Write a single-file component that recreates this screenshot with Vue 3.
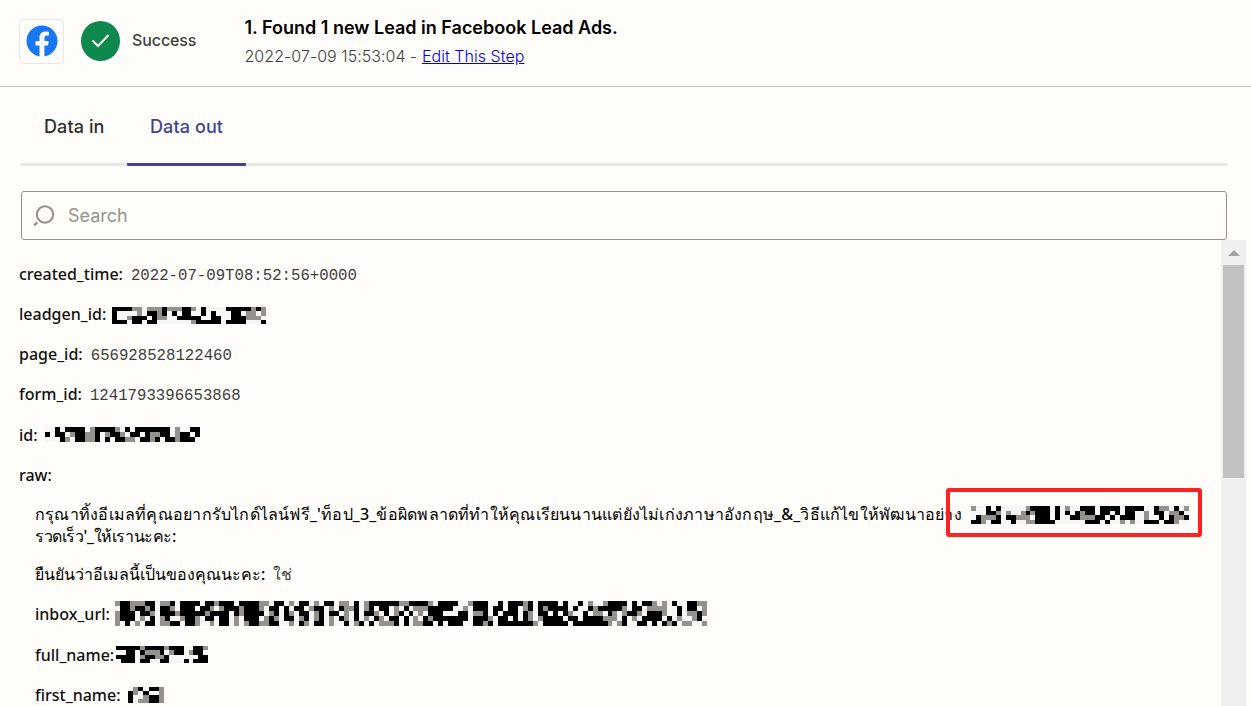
<template>
  <main class="step">
    <header class="step-header">
      <div class="app-icon">
        <svg width="32" height="32" viewBox="0 0 32 32">
          <circle cx="16" cy="16" r="15.5" fill="#1877f2" />
          <path d="M13.5 32V20.6H9.5V16h4v-3.5c0-4 2.3-6.1 5.9-6.1 1.7 0 3.5.3 3.5.3v3.9h-2c-1.9 0-2.5 1.2-2.5 2.4V16h4.3l-.7 4.6h-3.6V32z" fill="#fffdf9" />
        </svg>
      </div>
      <div class="status-icon">
        <svg width="20" height="16" viewBox="0 0 20 16">
          <path d="M1.5 7.5 7 13 17.5 2" fill="none" stroke="#fffdf9" stroke-width="2" />
        </svg>
      </div>
      <div class="status-label">Success</div>
      <div class="summary">
        <div class="summary-title">1. Found 1 new Lead in Facebook Lead Ads.</div>
        <div class="summary-meta">2022-07-09 15:53:04 - <a href="#">Edit This Step</a></div>
      </div>
    </header>

    <nav class="tabs">
      <button
        v-for="tab in tabs"
        :key="tab"
        class="tab"
        :class="{ active: tab === activeTab }"
        @click="activeTab = tab"
      >{{ tab }}</button>
    </nav>

    <label class="search">
      <svg width="22" height="22" viewBox="0 0 22 22">
        <circle cx="12" cy="9.5" r="8.2" fill="none" stroke="#95928e" stroke-width="2.1" />
        <path d="M4.4 17.1 1.2 20.3" stroke="#95928e" stroke-width="2.4" />
      </svg>
      <input type="text" placeholder="Search" />
    </label>

    <div class="output">
      <div class="fields">
        <div v-for="field in fields" :key="field.name" class="field" :class="field.kind">
          <span class="name">{{ field.name }}</span>
          <span v-if="field.value" class="value">{{ field.value }}</span>
          <span v-if="field.mask" class="mask-slot" :class="field.maskClass">
            <svg
              class="mask"
              :viewBox="`0 0 ${field.mask[0].length} ${field.mask.length}`"
              preserveAspectRatio="none"
              shape-rendering="crispEdges"
            >
              <rect
                v-for="(cell, i) in cells(field.mask)"
                :key="i"
                :x="cell.x"
                :y="cell.y"
                width="1"
                height="1"
                :fill="cell.fill"
              />
            </svg>
          </span>
        </div>
      </div>
      <div class="scrollbar">
        <svg class="arrow" width="12" height="6" viewBox="0 0 12 6">
          <path d="M0 6 6 0l6 6z" fill="#a3a3a3" />
        </svg>
        <div class="thumb"></div>
      </div>
    </div>
  </main>
</template>

<script setup>
import { ref } from 'vue';

const tabs = ['Data in', 'Data out'];
const activeTab = ref('Data out');

// # black, + grey, . off-white
const fills = { '#': '#000000', '+': '#95928e', '.': '#f7f6f4' };

const fields = [
  { name: 'created_time:', value: '2022-07-09T08:52:56+0000' },
  {
    name: 'leadgen_id:',
    maskClass: 'leadgen',
    mask: [
      '####++.+++#+++##+.#....#####+#+',
      '#....+.##+#.#.##..#.#...##.++.+',
      '#..+###.#++..#####..##..###+++.',
      '###.##.##.......+#####.####...#'
    ]
  },
  { name: 'page_id:', value: '656928528122460' },
  { name: 'form_id:', value: '1241793396653868' },
  {
    name: 'id:',
    maskClass: 'id',
    mask: [
      '..#.####.+####+.#.#######.+..##',
      '#.##.+##++#.+##+.##.#++##.+##.#',
      '...#+.##++#.#.##++.##+#.##+###.'
    ]
  },
  { name: 'raw:' },
  {
    name: "กรุณาทิ้งอีเมลที่คุณอยากรับไกด์ไลน์ฟรี_'ท็อป_3_ข้อผิดพลาดที่ทำให้คุณเรียนนานแต่ยังไม่เก่งภาษาอังกฤษ_&_วิธีแก้ไขให้พัฒนาอย่าง\nรวดเร็ว'_ให้เรานะคะ:",
    kind: 'nested question',
    maskClass: 'highlighted',
    mask: [
      '+..#.#.....+####.#.+..###.####.####..#++.#.+',
      '...##+.+..+#+###.#.#.#+##.##.#.##..+.##.++#.',
      '.#+++#.##+++.###.#..##+++##.#.###..+..#.#++#',
      '##+.##..#..++####......###.#..+.+..###.##+..'
    ]
  },
  { name: 'ยืนยันว่าอีเมลนี้เป็นของคุณนะคะ:', value: 'ใช่', kind: 'nested thai' },
  {
    name: 'inbox_url:',
    kind: 'nested',
    maskClass: 'inbox',
    mask: [
      '+##+++##.++#.####.##+###.####++.##.+.##.+.##.++.#.+######++####+.####..+###..#.###+#.####.#..#.+..+####.#.##+.+.#..##++',
      '.##+##+#.##+.###.##+.+###+###+.##.#.##.+##.+.#++#.+#.##.+.#.+++#####..+.###.##.##.+#.#+####.#..#+#####+.##.++++..#.##.+',
      '+###.##+.###+#####+####.#+####.+#.#+.##.+#.##.+.#.##+.#.+#.#.+.###...##.++#.#.###.#+.##.#.#+..#.++.#+.+##+.###+..#.++#+',
      '+###.+.#.+#..+##+.##.##.+.###.+#+.##.+#.+#.+.#+.#.+.#+.##.#.+.#+#######.###+.##.#.#+.+####.##.####+++.#.+.####.#.+..+#.',
      '+.#.+.##.++##.##+..+.##.+.+##++##..+.#+.##.+..#.+#.#.+++#.#.++##.#.###..##+#.#######+.#####.#######+.+#..##.#.#+#.++..+'
    ]
  },
  {
    name: 'full_name:',
    kind: 'nested',
    maskClass: 'full',
    mask: [
      '#####+####+###..##+',
      '..##.#+++#.+##.+##.',
      '####.+##++#......##',
      '.###.##..##...#.###'
    ]
  },
  {
    name: 'first_name:',
    kind: 'nested',
    maskClass: 'first',
    mask: ['.+#.##+', '#+.#..+', '#..+##+', '#.++##+']
  }
];

function cells(rows) {
  return rows.flatMap((row, y) =>
    [...row].map((mark, x) => ({ x, y, fill: fills[mark] }))
  );
}
</script>

<style>
body {
  background: #fffdf9;
  overflow: hidden;
}
</style>

<style scoped>
.step {
  display: flex;
  flex-direction: column;
  height: 706px;
  overflow: hidden;
  background: #fffdf9;
  color: #2d2e2e;
  font-family: Inter, "Liberation Sans", sans-serif;
}

.step-header {
  display: flex;
  align-items: center;
  box-sizing: border-box;
  flex: 0 0 87px;
  padding: 0 19px 4px;
  border-bottom: 1px solid #c9c8c6;
}

.app-icon {
  display: flex;
  align-items: center;
  justify-content: center;
  box-sizing: border-box;
  width: 45px;
  height: 45px;
  margin-right: 17px;
  border: 1px solid #e8e7e4;
  border-radius: 5px;
}

.status-icon {
  display: flex;
  align-items: center;
  justify-content: center;
  width: 39px;
  height: 40px;
  margin-right: 12px;
  border-radius: 50%;
  background: #0f884e;
}

.status-label {
  width: 112.5px;
  padding-bottom: 2px;
  font-size: 16px;
  font-weight: 500;
  letter-spacing: -0.1px;
  color: #403f3e;
}

.summary {
  padding-top: 2px;
}

.summary-title {
  font-size: 18px;
  font-weight: 600;
  line-height: 28px;
  color: #000;
}

.summary-meta {
  font-size: 16px;
  font-weight: 300;
  line-height: 28px;
  letter-spacing: 0.04px;
  color: #403f3e;
}

.summary-meta a {
  color: #0000ee;
}

.tabs {
  display: flex;
  flex: 0 0 79px;
  box-sizing: border-box;
  margin: 0 24px 0 21px;
  box-shadow: inset 0 -3px #e8e7e4;
}

.tab {
  padding: 3px 22.5px 0 23px;
  border: 0;
  border-bottom: 3px solid transparent;
  background: none;
  font: 500 18px Inter, sans-serif;
  letter-spacing: 0.1px;
  color: #2d2e2e;
}

.tab.active {
  border-bottom-color: #3d4592;
  border-radius: 1px;
  color: #3d4592;
}

.search {
  display: flex;
  align-items: center;
  flex: 0 0 49px;
  box-sizing: border-box;
  gap: 13px;
  margin: 25px 24px 0 21px;
  padding: 0 11px;
  border: 1px solid #95928e;
  border-radius: 3px;
}

.search input {
  flex: 1;
  padding: 0;
  border: 0;
  outline: 0;
  background: none;
  font: 400 18px Inter, sans-serif;
}

.search input::placeholder {
  color: #95928e;
}

.output {
  display: flex;
  flex: 1;
  min-height: 0;
}

.fields {
  flex: 1;
  padding: 22px 0 0 19px;
  overflow: hidden;
  color: #111;
  font-family: "Noto Sans", "Open Sans", sans-serif;
  font-size: 16px;
}

.field {
  display: flex;
  align-items: center;
  height: 24px;
  margin-bottom: 16.16px;
  white-space: nowrap;
}

.name {
  font-weight: 480;
}

.value {
  margin-left: 8px;
  padding-top: 4px;
  font-family: "Liberation Mono", monospace;
  font-size: 15.7px;
  color: #403f3e;
}

.nested {
  margin-left: 16px;
}

.thai .value {
  padding-top: 0;
}

.thai .name,
.question .name {
  color: #000;
  font-weight: 500;
}

.question {
  align-items: flex-start;
  height: 44px;
  margin-bottom: 15.3px;
  line-height: 22px;
}

.question .name {
  width: 929px;
  letter-spacing: -0.4px;
  white-space: pre;
}

.question .name::first-line {
  letter-spacing: 0.22px;
}

.mask-slot {
  display: flex;
  margin-left: 7px;
}

.mask {
  width: 155px;
  height: 15px;
}

.leadgen {
  margin: 3px 0 0 5.5px;
}

.leadgen .mask {
  width: 154px;
  height: 17px;
}

.inbox {
  margin: -2px 0 0 5px;
}

.inbox .mask {
  width: 592px;
  height: 25px;
}

.full {
  margin-left: 2px;
}

.full .mask {
  width: 92px;
  height: 17px;
}

.first .mask {
  width: 36px;
  height: 16px;
}

.highlighted {
  position: relative;
  margin: 3px 0 0 7px;
}

.highlighted .mask {
  width: 218px;
  height: 18px;
}

.highlighted::after {
  content: "";
  position: absolute;
  inset: -18px -13px -13px -25px;
  border: 4px solid #ff2020;
  border-radius: 3px;
}

.scrollbar {
  display: flex;
  flex-direction: column;
  align-items: center;
  width: 25px;
  margin-right: 5px;
  background: #f0f0f0;
}

.arrow {
  margin: 10px 0 9px;
}

.thumb {
  width: 21px;
  height: 213px;
  background: #c1c1c1;
}
</style>
